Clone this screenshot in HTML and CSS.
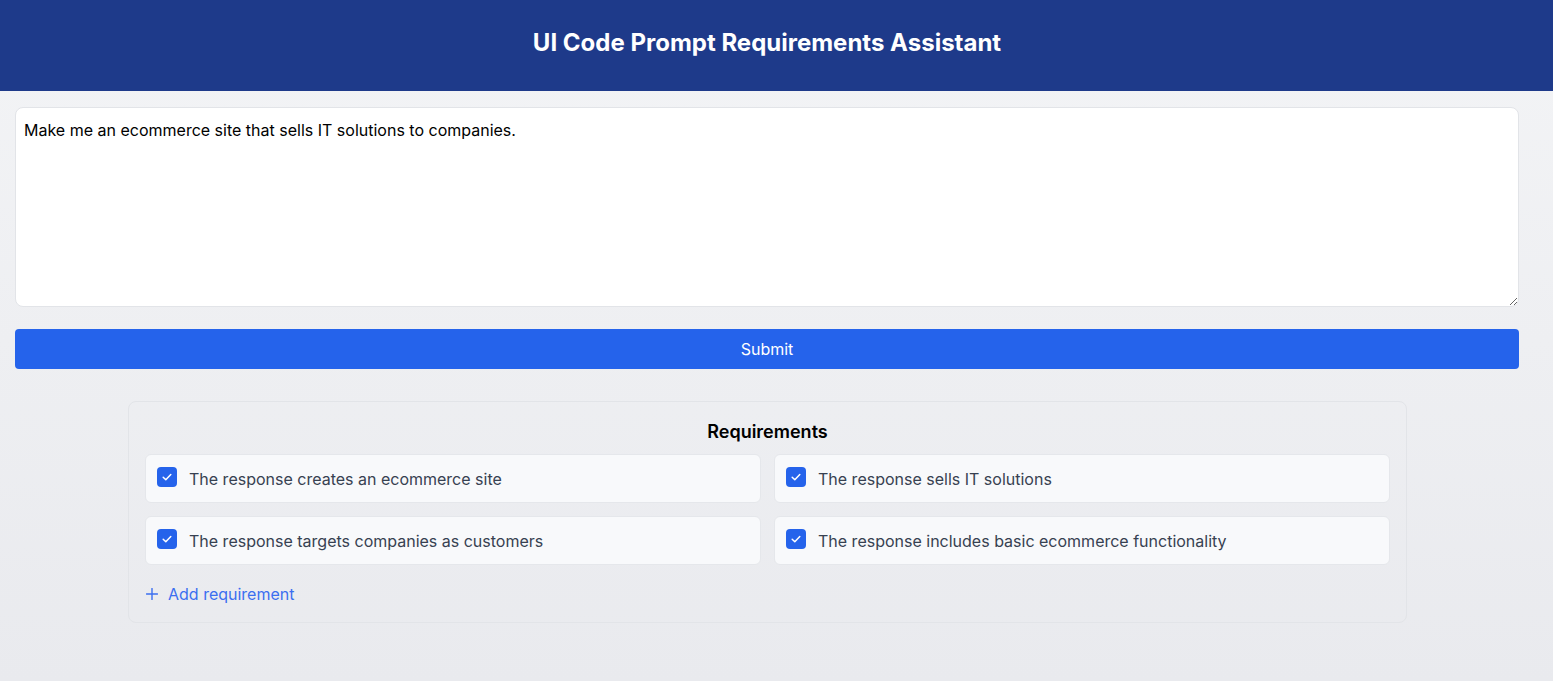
FILE: index.html
```html
<!DOCTYPE html>
<html lang="en">
<head>
<meta charset="utf-8">
<title>UI Code Prompt Requirements Assistant</title>
<link rel="stylesheet" href="styles.css">
</head>
<body>
<header class="topbar">
  <div class="topbar-inner"><h1 class="title">UI Code Prompt Requirements Assistant</h1></div>
</header>
<main class="main">
  <textarea class="prompt">Make me an ecommerce site that sells IT solutions to companies.</textarea>
  <button class="submit" type="button">Submit</button>
  <section class="req-card">
    <h2 class="req-title">Requirements</h2>
    <div class="req-grid">
      <label class="req-item"><span class="check"><svg viewBox="0 0 20 20" width="20" height="20"><path d="M6.2 10.2l2.6 2.5 5-5.2" fill="none" stroke="#fff" stroke-width="1.5" stroke-linecap="round" stroke-linejoin="round"/></svg></span><span class="req-text">The response creates an ecommerce site</span></label>
      <label class="req-item"><span class="check"><svg viewBox="0 0 20 20" width="20" height="20"><path d="M6.2 10.2l2.6 2.5 5-5.2" fill="none" stroke="#fff" stroke-width="1.5" stroke-linecap="round" stroke-linejoin="round"/></svg></span><span class="req-text">The response sells IT solutions</span></label>
      <label class="req-item"><span class="check"><svg viewBox="0 0 20 20" width="20" height="20"><path d="M6.2 10.2l2.6 2.5 5-5.2" fill="none" stroke="#fff" stroke-width="1.5" stroke-linecap="round" stroke-linejoin="round"/></svg></span><span class="req-text">The response targets companies as customers</span></label>
      <label class="req-item"><span class="check"><svg viewBox="0 0 20 20" width="20" height="20"><path d="M6.2 10.2l2.6 2.5 5-5.2" fill="none" stroke="#fff" stroke-width="1.5" stroke-linecap="round" stroke-linejoin="round"/></svg></span><span class="req-text">The response includes basic ecommerce functionality</span></label>
    </div>
    <button class="add" type="button"><svg viewBox="0 0 12 12" width="12" height="12"><path d="M6 0.5v11M0.5 6h11" stroke="#3b6ff0" stroke-width="1.4" stroke-linecap="round"/></svg><span>Add requirement</span></button>
  </section>
</main>
</body>
</html>
```
FILE: styles.css
```css
* { box-sizing: border-box; }
html, body { margin: 0; padding: 0; }
body {
  min-height: 681px;
  font-family: Inter, "Noto Sans", sans-serif;
  background: linear-gradient(to bottom, #f3f4f6, #e9eaee);
  color: #111827;
}
.topbar {
  background: #1e3a8a;
  height: 91px;
}
.topbar-inner {
  margin-left: 15px;
  width: 1504px;
  height: 91px;
  display: flex;
  align-items: center;
  justify-content: center;
}
.title {
  margin: 0;
  color: #fff;
  font-size: 24px;
  font-weight: 700;
  padding-bottom: 6px;
}
.main {
  margin-left: 15px;
  width: 1504px;
  padding-top: 16px;
  display: flex;
  flex-direction: column;
}
.prompt {
  display: block;
  width: 100%;
  height: 200px;
  border: 1px solid #e2e4e8;
  border-radius: 8px;
  background: #fff;
  padding: 10px 8px;
  font-family: Inter, "Noto Sans", sans-serif;
  font-size: 16px;
  line-height: 24px;
  color: #000;
  resize: vertical;
  outline: none;
}
.submit {
  margin-top: 22px;
  height: 40px;
  width: 100%;
  border: none;
  border-radius: 4px;
  background: #2563eb;
  color: #fff;
  font-family: Inter, "Noto Sans", sans-serif;
  font-size: 16px;
}
.req-card {
  margin: 32px 0 0 113px;
  width: 1279px;
  border: 1px solid #e2e4e8;
  border-radius: 8px;
  padding: 16px;
}
.req-title {
  margin: 0 0 8px;
  text-align: center;
  font-size: 18px;
  font-weight: 600;
  line-height: 28px;
  color: #000;
}
.req-grid {
  display: grid;
  grid-template-columns: 1fr 1fr;
  gap: 13px 13px;
}
.req-item {
  display: flex;
  align-items: center;
  gap: 12px;
  height: 49px;
  padding: 0 11px;
  background: #f8f9fb;
  border: 1px solid #e5e7eb;
  border-radius: 6px;
}
.check {
  width: 20px;
  height: 20px;
  border-radius: 4px;
  background: #2563eb;
  display: flex;
  flex-shrink: 0;
  margin-top: -4px;
}
.req-text {
  font-size: 16px;
  color: #374151;
}
.add {
  margin-top: 17px;
  display: flex;
  align-items: center;
  gap: 10px;
  background: none;
  border: none;
  padding: 0 0 0 1px;
  font-family: Inter, "Noto Sans", sans-serif;
  font-size: 16px;
  color: #3b6ff0;
  height: 24px;
}
```
